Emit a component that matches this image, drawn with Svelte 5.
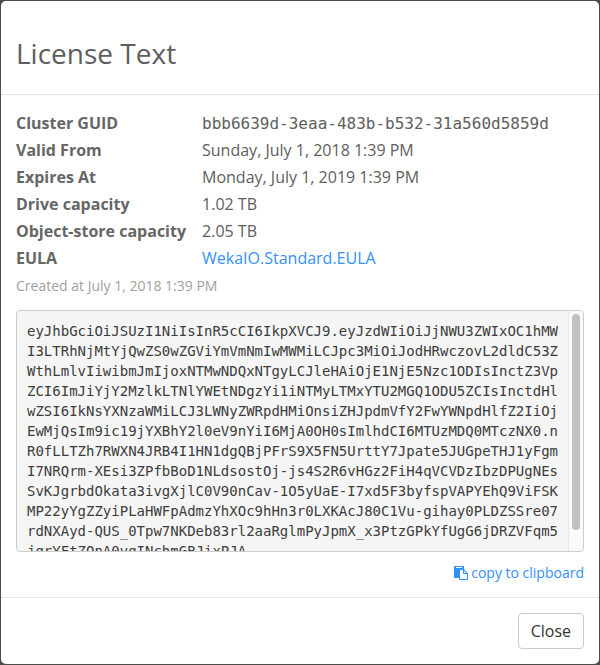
<script>
  const details = [
    { label: 'Cluster GUID', value: 'bbb6639d-3eaa-483b-b532-31a560d5859d', mono: true },
    { label: 'Valid From', value: 'Sunday, July 1, 2018 1:39 PM' },
    { label: 'Expires At', value: 'Monday, July 1, 2019 1:39 PM' },
    { label: 'Drive capacity', value: '1.02 TB' },
    { label: 'Object-store capacity', value: '2.05 TB' },
    { label: 'EULA', value: 'WekaIO.Standard.EULA', href: '#eula' }
  ];

  const license = [
    'eyJhbGciOiJSUzI1NiIsInR5cCI6IkpXVCJ9.eyJzdWIiOiJjNWU3ZWIxOC1hMW',
    'I3LTRhNjMtYjQwZS0wZGViYmVmNmIwMWMiLCJpc3MiOiJodHRwczovL2dldC53Z',
    'WthLmlvIiwibmJmIjoxNTMwNDQxNTgyLCJleHAiOjE1NjE5Nzc1ODIsInctZ3Vp',
    'ZCI6ImJiYjY2MzlkLTNlYWEtNDgzYi1iNTMyLTMxYTU2MGQ1ODU5ZCIsInctdHl',
    'wZSI6IkNsYXNzaWMiLCJ3LWNyZWRpdHMiOnsiZHJpdmVfY2FwYWNpdHlfZ2IiOj',
    'EwMjQsIm9ic19jYXBhY2l0eV9nYiI6MjA0OH0sImlhdCI6MTUzMDQ0MTczNX0.n',
    'R0fLLTZh7RWXN4JRB4I1HN1dgQBjPFrS9X5FN5UrttY7Jpate5JUGpeTHJ1yFgm',
    'I7NRQrm-XEsi3ZPfbBoD1NLdsostOj-js4S2R6vHGz2FiH4qVCVDzIbzDPUgNEs',
    'SvKJgrbdOkata3ivgXjlC0V90nCav-1O5yUaE-I7xd5F3byfspVAPYEhQ9ViFSK',
    'MP22yYgZZyiPLaHWFpAdmzYhXOc9hHn3r0LXKAcJ80C1Vu-gihay0PLDZSSre07',
    'rdNXAyd-QUS_0Tpw7NKDeb83rl2aaRglmPyJpmX_x3PtzGPkYfUgG6jDRZVFqm5',
    'jgrYFtZOnA0vgINchmGBJixPJA'
  ].join('\n');

  let scrolled = $state(0);
</script>

<div class="backdrop">
  <div class="modal" role="dialog" aria-labelledby="title">
    <header><h1 id="title">License Text</h1></header>
    <main>
      <table>
        <tbody>
          {#each details as row}
            <tr>
              <th scope="row">{row.label}</th>
              <td class:mono={row.mono}>
                {#if row.href}<a href={row.href}>{row.value}</a>{:else}{row.value}{/if}
              </td>
            </tr>
          {/each}
        </tbody>
      </table>
      <p class="created">Created at July 1, 2018 1:39 PM</p>
      <div class="license">
        <pre onscroll={(e) => (scrolled = e.currentTarget.scrollTop)}>{license}</pre>
        <div class="track" aria-hidden="true">
          <div class="thumb" style:transform="translateY({Math.round(scrolled * 0.9)}px)"></div>
        </div>
      </div>
      <div class="copy">
        <button class="link" type="button">
          <svg viewBox="0 0 1792 1792" width="14" height="14" aria-hidden="true"><path fill="currentColor" d="M768 1664h896v-640h-416q-40 0-68-28t-28-68v-416h-384v1152zm256-1440v-64q0-13-9.500-22.500t-22.500-9.500h-704q-13 0-22.500 9.500t-9.500 22.500v64q0 13 9.500 22.500t22.500 9.500h704q13 0 22.500-9.500t9.500-22.500zm256 672h299l-299-299v299zm512 128v672q0 40-28 68t-68 28h-960q-40 0-68-28t-28-68v-160h-544q-40 0-68-28t-28-68v-1344q0-40 28-68t68-28h1088q40 0 68 28t28 68v328q21 13 36 28l408 408q28 28 48 76t20 88z" /></svg>
          copy to clipboard
        </button>
      </div>
    </main>
    <footer><button class="close" type="button">Close</button></footer>
  </div>
</div>

<style>
  :global(body) {
    background: #4d4d4d;
  }
  .backdrop {
    box-sizing: border-box;
    min-height: 100vh;
    padding: 1px;
    font: 16px/27px 'Open Sans', sans-serif;
    color: #5e5e5e;
  }
  .modal {
    background: #fff;
    border-radius: 5px;
  }
  header {
    padding: 32px 15px 20px;
    border-bottom: 1px solid #e5e5e5;
  }
  h1 {
    margin: 0;
    font-size: 28px;
    line-height: 41px;
    font-weight: 400;
  }
  main {
    padding: 15px 15px 12px;
  }
  table {
    border-collapse: collapse;
  }
  th,
  td {
    padding: 0;
    text-align: left;
    height: 27px;
  }
  th {
    padding-right: 16px;
    font-weight: 700;
    color: #666;
  }
  .mono {
    font-family: 'DejaVu Sans Mono', monospace;
  }
  a,
  .link {
    color: #3590fc;
    text-decoration: none;
  }
  .created {
    margin: 0 0 11px;
    font-size: 14px;
    color: #a0a0a0;
  }
  .license {
    display: flex;
    box-sizing: border-box;
    height: 242px;
    margin-bottom: 9px;
    border: 1px solid #ccc;
    border-radius: 4px;
    background: #f5f5f5;
    overflow: hidden;
  }
  pre {
    flex: 1;
    min-width: 0;
    margin: 0;
    padding: 10px;
    color: #3c3c3c;
    font: 14px/20px 'DejaVu Sans Mono', monospace;
    overflow-x: hidden;
    overflow-y: auto;
    scrollbar-width: none;
  }
  .track {
    box-sizing: border-box;
    flex: none;
    width: 15px;
    padding: 3px;
    border-left: 1px solid #e8e8e8;
    background: #fafafa;
  }
  .thumb {
    width: 8px;
    height: 216px;
    border-radius: 4px;
    background: #c1c1c1;
  }
  .copy {
    display: flex;
    justify-content: flex-end;
  }
  button {
    font: inherit;
    cursor: pointer;
  }
  .link {
    display: flex;
    align-items: center;
    gap: 3px;
    padding: 0;
    border: 0;
    background: none;
    font-size: 14px;
    line-height: 24px;
  }
  footer {
    display: flex;
    justify-content: flex-end;
    padding: 15px;
    border-top: 1px solid #e5e5e5;
  }
  .close {
    padding: 6px 12px;
    border: 1px solid #ccc;
    border-radius: 4px;
    background: #fff;
    color: #333;
    line-height: 22px;
  }
</style>
